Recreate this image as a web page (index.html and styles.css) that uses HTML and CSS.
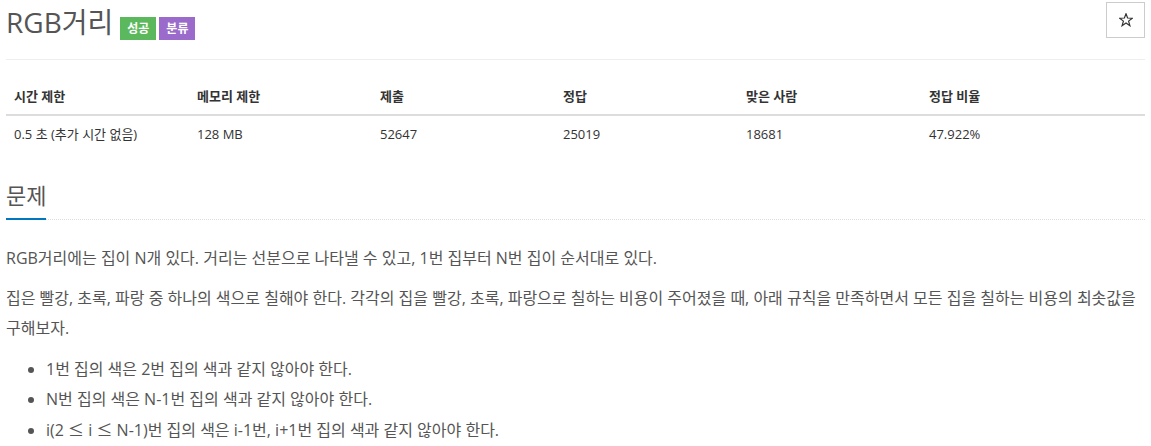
FILE: index.html
```html
<!DOCTYPE html>
<html lang="ko">
<head>
<meta charset="utf-8">
<title>RGB거리</title>
<link rel="stylesheet" href="styles.css">
</head>
<body>
<div class="page">
  <div class="page-header">
    <h1 class="title-row">
      <span class="title">RGB거리</span>
      <span class="label label-green">성공</span>
      <span class="label label-purple">분류</span>
    </h1>
    <button class="star-btn" type="button" aria-label="즐겨찾기">
      <svg width="14" height="14" viewBox="0 0 14 14"><polygon points="7,0.8 8.6,5 13.3,5.2 9.6,8.1 10.9,12.7 7,10 3.1,12.7 4.4,8.1 0.7,5.2 5.4,5" fill="none" stroke="#333" stroke-width="1.2" stroke-linejoin="miter"/></svg>
    </button>
  </div>

  <div class="info-table">
    <div class="th">시간 제한</div>
    <div class="th">메모리 제한</div>
    <div class="th">제출</div>
    <div class="th">정답</div>
    <div class="th">맞은 사람</div>
    <div class="th">정답 비율</div>
    <div class="td">0.5 초 (추가 시간 없음)</div>
    <div class="td">128 MB</div>
    <div class="td">52647</div>
    <div class="td">25019</div>
    <div class="td">18681</div>
    <div class="td">47.922%</div>
  </div>

  <section class="problem">
    <div class="headline"><h2>문제</h2></div>
    <div class="problem-text">
      <p>RGB거리에는 집이 N개 있다. 거리는 선분으로 나타낼 수 있고, 1번 집부터 N번 집이 순서대로 있다.</p>
      <p>집은 빨강, 초록, 파랑 중 하나의 색으로 칠해야 한다. 각각의 집을 빨강, 초록, 파랑으로 칠하는 비용이 주어졌을 때, 아래 규칙을 만족하면서 모든 집을 칠하는 비용의 최솟값을 구해보자.</p>
      <ul>
        <li>1번 집의 색은 2번 집의 색과 같지 않아야 한다.</li>
        <li>N번 집의 색은 N-1번 집의 색과 같지 않아야 한다.</li>
        <li>i(2 <span class="math-sym">≤</span> i <span class="math-sym">≤</span> N-1)번 집의 색은 i-1번, i+1번 집의 색과 같지 않아야 한다.</li>
      </ul>
    </div>
  </section>
</div>
</body>
</html>
```

FILE: styles.css
```css
* { box-sizing: border-box; }

html, body {
  margin: 0;
  padding: 0;
  background: #fff;
}

body {
  font-family: "Open Sans", "Noto Sans CJK KR", sans-serif;
  color: #555;
}

.page {
  padding: 0 6px;
}

.page-header {
  display: flex;
  justify-content: space-between;
  align-items: flex-start;
  padding-top: 2px;
  height: 60px;
  border-bottom: 1px solid #eee;
}

.title-row {
  margin: 0;
  display: flex;
  align-items: flex-start;
  font-weight: normal;
}

.title {
  font-size: 28px;
  line-height: 40px;
  color: #555;
  margin-right: 7px;
}

.label {
  display: inline-block;
  margin-top: 15px;
  height: 23px;
  line-height: 23px;
  padding: 0 7px;
  font-size: 12px;
  font-weight: bold;
  color: #fff;
  margin-right: 3px;
}

.label-green { background: #5cb85c; }
.label-purple { background: #9b6bcc; }

.star-btn {
  width: 39px;
  height: 36px;
  background: #fff;
  border: 1px solid #ccc;
  border-radius: 0;
  padding: 0;
  display: flex;
  align-items: center;
  justify-content: center;
  margin-top: 0;
}

.info-table {
  display: grid;
  grid-template-columns: repeat(5, 183px) 1fr;
  margin-top: 18px;
  font-size: 13px;
  color: #333;
}

.th, .td {
  padding: 8px;
  line-height: 20px;
}

.th {
  font-weight: bold;
  border-bottom: 2px solid #ddd;
}

.problem {
  margin-top: 30px;
}

.headline {
  display: flex;
  border-bottom: 1px dotted #ddd;
}

.headline h2 {
  margin: 0 0 -1px 0;
  font-size: 22px;
  font-weight: normal;
  line-height: 26px;
  padding-bottom: 10px;
  border-bottom: 2px solid #0076c0;
  color: #555;
}

.problem-text {
  margin-top: 23px;
  font-size: 16px;
  line-height: 30px;
  color: #555;
}

.problem-text p {
  margin: 0 0 10px 0;
}

.problem-text ul {
  margin: 11px 0 0 0;
  padding-left: 40px;
}

.math-sym {
  font-family: "Noto Sans CJK KR", sans-serif;
}
```
